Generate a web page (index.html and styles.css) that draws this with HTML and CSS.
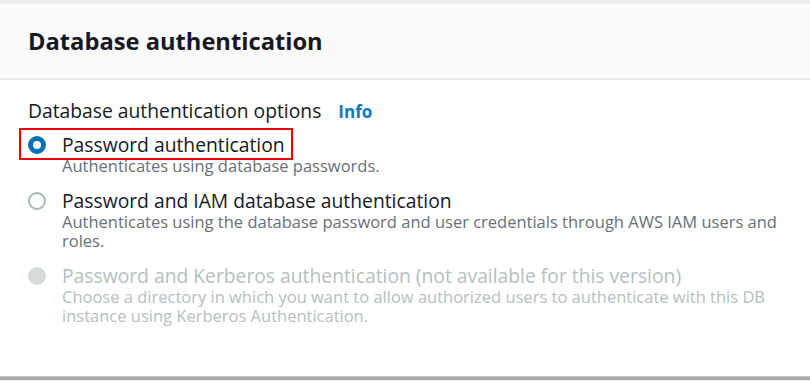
FILE: index.html
```html
<!DOCTYPE HTML>
<html>
<head>
	<meta http-equiv="content-type" content="text/html; charset=utf-8" />
	<title>Database authentication</title>
	<link rel="stylesheet" href="styles.css">
</head>
<body>
	<div class="card">
		<div class="cardHeader">
			<h2>Database authentication</h2>
		</div>

		<div class="cardBody">
			<div class="fieldLabel">
				Database authentication options
				<span class="info">Info</span>
			</div>

			<div class="option">
				<div class="optionTitle selectedBox">
					<span class="radio checked"></span>
					<span>Password authentication</span>
				</div>
				<div class="optionDesc">Authenticates using database passwords.</div>
			</div>

			<div class="option">
				<div class="optionTitle">
					<span class="radio"></span>
					<span>Password and IAM database authentication</span>
				</div>
				<div class="optionDesc">Authenticates using the database password and user credentials through AWS IAM users and roles.</div>
			</div>

			<div class="option disabled">
				<div class="optionTitle">
					<span class="radio"></span>
					<span>Password and Kerberos authentication (not available for this version)</span>
				</div>
				<div class="optionDesc">Choose a directory in which you want to allow authorized users to authenticate with this DB instance using Kerberos Authentication.</div>
			</div>
		</div>
	</div>
</body>
</html>
```

FILE: styles.css
```css
 /* Page */
* {
	margin: 0;
	padding: 0;
	box-sizing: border-box;
}

html, body {
	width: 100%;
	height: 100%;
	background-color: #ececec;
	font-family: "Open Sans", "Noto Sans", sans-serif;
	color: #16191f;
}

body {
	padding-top: 4px;
}

.card {
	height: 373px;
	background-color: white;
	border-bottom: 1px solid #c8c8c8;
	box-shadow: 0 3px 0 #a9a9a9;
}

 /* Header */

.cardHeader {
	height: 76px;
	background-color: #fafafa;
	border-bottom: 2px solid #eaeded;
	padding-left: 28px;
	display: flex;
	align-items: center;
}

h2 {
	font-size: 23.7px;
	font-weight: bold;
}

 /* Body */

.cardBody {
	padding: 19px 20px 0 28px;
}

.fieldLabel {
	font-size: 19.3px;
	line-height: 24px;
	margin-bottom: 10px;
}

.info {
	color: #0a7bbf;
	font-weight: bold;
	font-size: 17px;
	margin-left: 12px;
}

.option {
	margin-bottom: 15px;
}

.optionTitle {
	display: flex;
	align-items: center;
	gap: 16px;
	font-size: 19.3px;
	line-height: 22px;
	width: fit-content;
}

.selectedBox {
	border: 2px solid #ee0000;
	padding: 4px 6px 2px 7px;
	margin: -6px 0 -4px -9px;
}

.radio {
	width: 18px;
	height: 18px;
	border-radius: 50%;
	border: 2px solid #aab7b8;
	background-color: white;
	flex-shrink: 0;
}

.radio.checked {
	border: 5px solid #0a6fb5;
}

.optionDesc {
	font-size: 16.5px;
	line-height: 19px;
	color: #687078;
	padding-left: 34px;
	padding-right: 10px;
}

.disabled .optionTitle,
.disabled .optionDesc {
	color: #b4bfc0;
}

.disabled .radio {
	background-color: #d5dbdb;
	border-color: #d5dbdb;
}
```
